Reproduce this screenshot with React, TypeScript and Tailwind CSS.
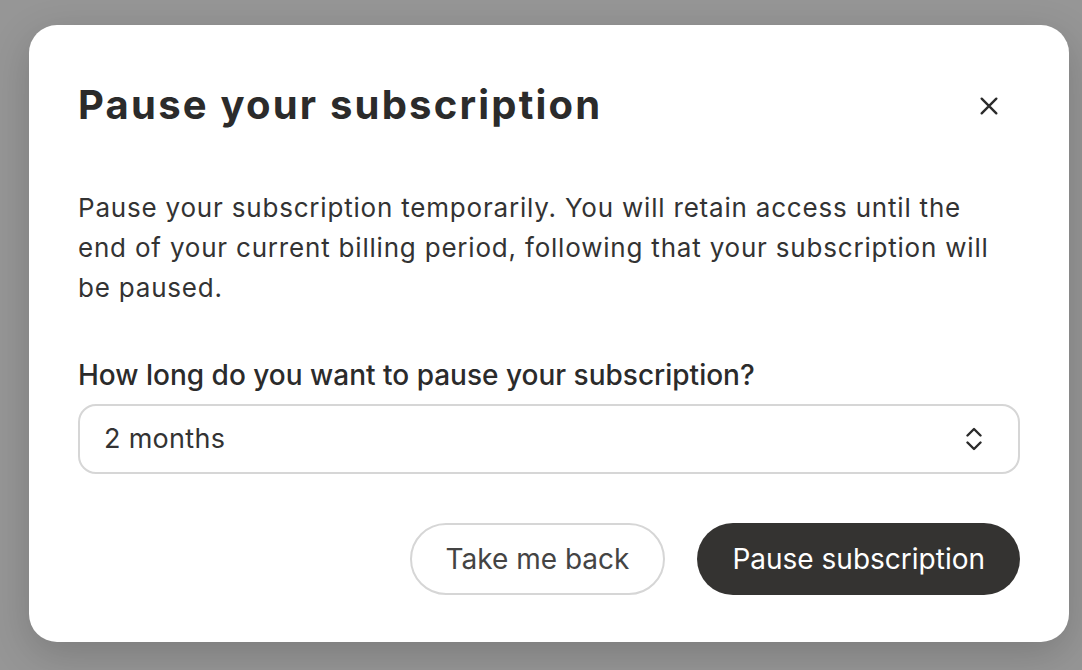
import React from "react";

export default function App() {
  return (
    <div
      className="h-[670px] w-full bg-[#969696] pt-[25px] pl-[29px] overflow-hidden"
      style={{ fontFamily: "Inter, 'Noto Sans', sans-serif" }}
    >
      <div className="w-[1040px] h-[617px] bg-white rounded-[28px] shadow-[0_12px_40px_rgba(0,0,0,0.18)] pl-[49px] pr-[49px] pt-[54px] text-[#2e2e2e]">
        <div className="flex items-center justify-between">
          <h1 className="text-[40px] leading-[52px] font-bold tracking-[2.2px] text-[#2b2b2b]">
            Pause your subscription
          </h1>
          <button className="mr-[20px] mt-[2px] text-[#2b2b2b]">
            <svg width="22" height="22" viewBox="0 0 24 24" fill="none" stroke="currentColor" strokeWidth="2.6" strokeLinecap="round">
              <path d="M4 4L20 20M20 4L4 20" />
            </svg>
          </button>
        </div>
        <p className="mt-[57px] max-w-[930px] text-[26px] leading-[40px] tracking-[0.8px] text-[#333]">
          Pause your subscription temporarily. You will retain access until the end of your current billing period, following that your subscription will be paused.
        </p>
        <div className="mt-[47px] text-[28px] leading-[40px] font-medium text-[#2b2b2b]">
          How long do you want to pause your subscription?
        </div>
        <div className="mt-[9px] h-[70px] rounded-[18px] border-2 border-[#d6d6d6] flex items-center justify-between pl-[24px] pr-[36px]">
          <span className="text-[27px] tracking-[0.3px] text-[#333]">2 months</span>
          <svg width="16" height="24" viewBox="0 0 16 24" fill="none" stroke="#2b2b2b" strokeWidth="2.4" strokeLinecap="round" strokeLinejoin="round">
            <path d="M1.5 8.5L8 2L14.5 8.5" />
            <path d="M1.5 15.5L8 22L14.5 15.5" />
          </svg>
        </div>
        <div className="mt-[49px] flex justify-end gap-[32px]">
          <button className="h-[72px] px-[34px] rounded-full border-2 border-[#d6d6d6] text-[28px] text-[#444]">
            Take me back
          </button>
          <button className="h-[72px] px-[35px] rounded-full bg-[#343331] text-[28px] text-white">
            Pause subscription
          </button>
        </div>
      </div>
    </div>
  );
}
